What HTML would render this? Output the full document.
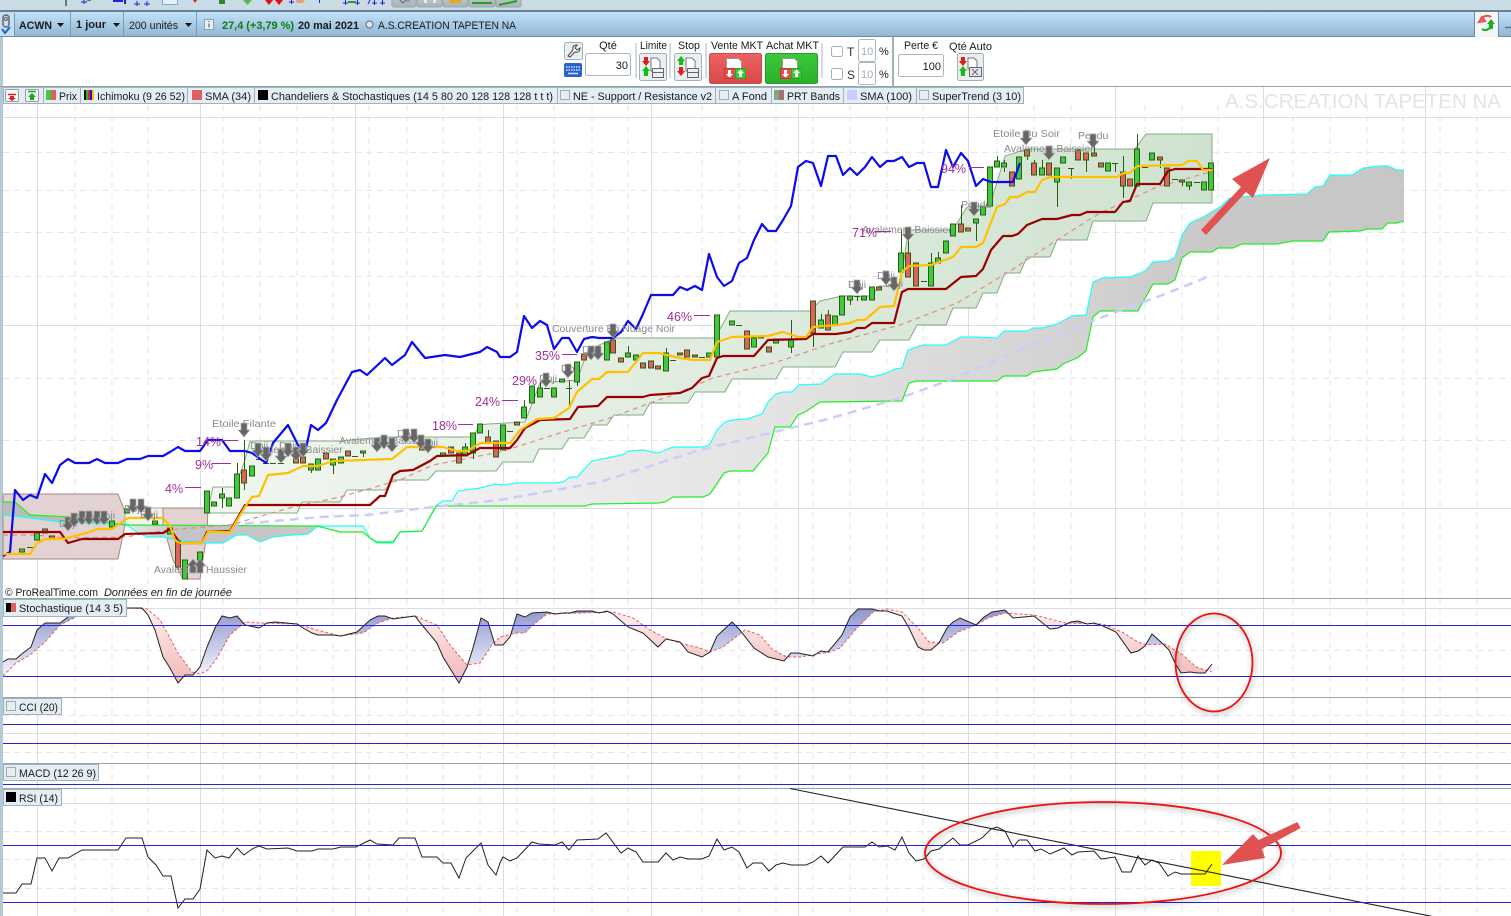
<!DOCTYPE html>
<html><head><meta charset="utf-8"><title>ACWN</title>
<style>
html,body{margin:0;padding:0;background:#fff;width:1511px;height:916px;overflow:hidden}
svg{display:block;font-family:"Liberation Sans",sans-serif}
text{white-space:pre}
.t{font-size:11px;fill:#1a1a1a}
.l{font-size:10.5px;fill:#8a8a8a}
.p{font-size:12.5px;fill:#a0309a}
.gs{stroke:#dcdce6;stroke-width:1;fill:none}
.gd{stroke:#e6e6ea;stroke-width:1;fill:none;stroke-dasharray:6 5}
.blue{stroke:#2323d8;stroke-width:1;fill:none}
.sep{stroke:#97a6ab;stroke-width:1;fill:none}
.box{fill:#e3edf3;stroke:#a0b2bb;stroke-width:1}
.inp{fill:#fff;stroke:#a8b8bd;stroke-width:1}
.btn{fill:#e9eef0;stroke:#a3b0b5;stroke-width:1}
.cb{fill:#e8eef0;stroke:#9eaeb4;stroke-width:1}
</style></head><body>
<svg width="1511" height="916" viewBox="0 0 1511 916" xmlns="http://www.w3.org/2000/svg">
<defs>
<linearGradient id="hd" x1="0" y1="0" x2="0" y2="1"><stop offset="0" stop-color="#c2e2fa"/><stop offset="1" stop-color="#8fb5d1"/></linearGradient>
<linearGradient id="band" gradientUnits="userSpaceOnUse" x1="200" y1="0" x2="1212" y2="0"><stop offset="0" stop-color="#f0f6f0"/><stop offset=".35" stop-color="#e5efe5"/><stop offset="1" stop-color="#cfe2cf"/></linearGradient>
<linearGradient id="cloud" gradientUnits="userSpaceOnUse" x1="0" y1="0" x2="1511" y2="0">
<stop offset="0" stop-color="#bbbbbb"/><stop offset=".08" stop-color="#bbbbbb"/><stop offset=".083" stop-color="#e8e8e8"/><stop offset=".12" stop-color="#c4c4c4"/><stop offset=".21" stop-color="#c8c8c8"/><stop offset=".212" stop-color="#f2f2f2"/><stop offset=".3" stop-color="#f0f0f0"/><stop offset=".5" stop-color="#e4e4e4"/><stop offset=".6" stop-color="#dcdcdc"/><stop offset=".72" stop-color="#d2d2d2"/><stop offset=".8" stop-color="#c8c8c8"/><stop offset="1" stop-color="#c6c6c6"/></linearGradient>
<linearGradient id="sb" gradientUnits="userSpaceOnUse" x1="0" y1="608" x2="0" y2="676"><stop offset="0" stop-color="#8e95cf"/><stop offset="1" stop-color="#f4f4fb"/></linearGradient>
<linearGradient id="sr" gradientUnits="userSpaceOnUse" x1="0" y1="608" x2="0" y2="676"><stop offset="0" stop-color="#fdf2f2"/><stop offset="1" stop-color="#f3bcbc"/></linearGradient>
<linearGradient id="rb" x1="0" y1="0" x2="0" y2="1"><stop offset="0" stop-color="#ee6262"/><stop offset="1" stop-color="#d84a4a"/></linearGradient>
<linearGradient id="gb" x1="0" y1="0" x2="0" y2="1"><stop offset="0" stop-color="#3cc83c"/><stop offset="1" stop-color="#2bb02b"/></linearGradient>
<linearGradient id="tb" x1="0" y1="0" x2="0" y2="1"><stop offset="0" stop-color="#bcc6cb"/><stop offset="1" stop-color="#a8b4ba"/></linearGradient>
<symbol id="ad" overflow="visible"><path d="M-3 0h6v7h3l-6 7-6-7h3z" fill="#666" stroke="#b0b0b0" stroke-width=".7"/></symbol>
<symbol id="au" overflow="visible"><path d="M-3 14h6v-7h3l-6-7-6 7h3z" fill="#666" stroke="#b0b0b0" stroke-width=".7"/></symbol>
<clipPath id="aboveD"><polygon points="3,598 3,676 16,663 30,655 45,642 60,625 78,616 128,608 147,609 160,620 170,638 178,653 192,672 200,674 208,670 217,658 230,635 245,622 260,623 297,624 317,630 340,636 363,633 378,623 393,618 415,616 437,625 450,645 467,665 480,663 492,645 500,637 517,633 525,633 533,625 547,614 613,612 633,618 650,630 665,638 683,644 697,647 710,652 723,647 745,630 760,635 773,650 787,657 800,657 830,652 840,648 857,628 873,612 887,609 902,612 918,628 929,642 943,643 958,632 976,625 988,618 1005,613 1034,615 1066,623 1103,624 1122,632 1138,642 1147,645 1165,644 1183,655 1196,667 1212,672 1212,598"/></clipPath>
<clipPath id="belowD"><polygon points="3,697 3,676 16,663 30,655 45,642 60,625 78,616 128,608 147,609 160,620 170,638 178,653 192,672 200,674 208,670 217,658 230,635 245,622 260,623 297,624 317,630 340,636 363,633 378,623 393,618 415,616 437,625 450,645 467,665 480,663 492,645 500,637 517,633 525,633 533,625 547,614 613,612 633,618 650,630 665,638 683,644 697,647 710,652 723,647 745,630 760,635 773,650 787,657 800,657 830,652 840,648 857,628 873,612 887,609 902,612 918,628 929,642 943,643 958,632 976,625 988,618 1005,613 1034,615 1066,623 1103,624 1122,632 1138,642 1147,645 1165,644 1183,655 1196,667 1212,672 1212,697"/></clipPath>
</defs>

<rect width="1511" height="916" fill="#fff"/>
<!-- top bar -->
<rect width="1511" height="11" fill="#c9dbe5"/>
<rect y="10" width="1511" height="2" fill="#6a8193"/>
<g>
<path d="M66 0v6" stroke="#111" stroke-width="1"/>
<path d="M81 2h6M84 0v4" stroke="#2020e0"/><path d="M87 0h4" stroke="#2a9a2a" stroke-width="2"/>
<path d="M113 1h10" stroke="#2020e0" stroke-width="2"/><path d="M125 0v4" stroke="#2020e0" stroke-width="2"/>
<path d="M134 4h6M137 1v5M144 4h6M147 1v5" stroke="#2020e0"/>
<path d="M162.500 0v4.500h15v-4.500" stroke="#7aa6e6" fill="#e8f0ff"/>
<path d="M193 0h4l-2 3z" fill="#e02020"/>
<rect x="219" width="6" height="4" fill="#2a8a2a"/>
<path d="M243 0h9l-4.500 5z" fill="#55bb55"/>
<path d="M265 0h8l-4 5zM275 0h8l-4 5z" fill="#e01010"/>
<path d="M289 2h5M291.500 0v4" stroke="#2020e0"/><path d="M296 0h9l-2 3h-6z" fill="#f0a070"/>
<path d="M319.500 0v3" stroke="#2020e0"/>
<path d="M343 3h5M345.500 0v5M355 3h5M357.500 0v5" stroke="#2020e0"/><path d="M348 2h8" stroke="#2a9a2a" stroke-width="2"/>
<path d="M368 4l2-4M372 3h5M374.500 0v5M380 3h5M382.500 0v5" stroke="#2020e0"/>
<rect x="392" y="-3" width="24" height="10" rx="2" fill="url(#tb)" stroke="#9aa7ad"/>
<rect x="417" y="-3" width="25" height="10" rx="2" fill="url(#tb)" stroke="#9aa7ad"/>
<rect x="443" y="-3" width="25" height="10" rx="2" fill="url(#tb)" stroke="#9aa7ad"/>
<rect x="469" y="-3" width="26" height="10" rx="2" fill="url(#tb)" stroke="#9aa7ad"/>
<rect x="496" y="-3" width="25" height="10" rx="2" fill="url(#tb)" stroke="#9aa7ad"/>
<path d="M400 0l3 3 3-3" stroke="#666" fill="none"/><path d="M406 1h4" stroke="#6666dd"/>
<rect x="424" y="0" width="3" height="3" fill="#e8e8e8"/><rect x="433" y="0" width="3" height="3" fill="#e8e8e8"/>
<rect x="449" y="0" width="12" height="3" fill="#e6a820"/>
<path d="M472 3h20" stroke="#1fa01f" stroke-width="2"/>
<path d="M499 5l18-4" stroke="#1fa01f" stroke-width="2"/>
</g>
<!-- blue header -->
<rect y="12" width="1511" height="25" fill="url(#hd)"/>
<path d="M0 36.500h1511" stroke="#6b8ea8"/>
<path d="M70.500 12v24M123.500 12v24M196.500 12v24" stroke="#7a9ab0"/>
<rect x="0" y="13" width="14" height="23" fill="#c4dff2"/>
<path d="M14.500 13v24" stroke="#7a9ab0"/>
<rect x="3" y="15" width="6" height="12" rx="3" fill="none" stroke="#666" stroke-width="1.500"/>
<circle cx="6" cy="19" r="1.500" fill="none" stroke="#666"/>
<path d="M2 29l3 4 5-6" stroke="#2a5fd0" stroke-width="2" fill="none"/>
<text x="19" y="29" class="t" font-weight="bold" textLength="33" lengthAdjust="spacingAndGlyphs">ACWN</text><path d="M57 23h7l-3.500 4z" fill="#111"/>
<text x="76" y="28" class="t" font-weight="bold" textLength="30" lengthAdjust="spacingAndGlyphs">1 jour</text><path d="M113 23h7l-3.500 4z" fill="#111"/>
<text x="129" y="29" class="t" textLength="49" lengthAdjust="spacingAndGlyphs">200 unités</text><path d="M185 23h7l-3.500 4z" fill="#111"/>
<rect x="204.500" y="19.500" width="9" height="10" fill="#e9eef2" stroke="#8da0ad"/><path d="M209 21v1M209 23.500v4" stroke="#445"/>
<text x="222" y="29" class="t" font-weight="bold" style="fill:#0a7d0a" textLength="72" lengthAdjust="spacingAndGlyphs">27,4 (+3,79 %)</text>
<text x="298" y="29" class="t" font-weight="bold" textLength="61" lengthAdjust="spacingAndGlyphs">20 mai 2021</text>
<circle cx="369.500" cy="24.500" r="3.500" fill="#dfe8ee" stroke="#667"/>
<text x="378" y="29" class="t" textLength="138" lengthAdjust="spacingAndGlyphs">A.S.CREATION TAPETEN NA</text>
<rect x="1475" y="12" width="23" height="25" fill="#f2f6f9"/>
<path d="M1474.500 12v25M1498.500 12v25" stroke="#6b8ea8"/>
<path d="M1491 17c-3-2-8-2-9 3M1479 22l3-5 3 4z" fill="none" stroke="#e85050" stroke-width="2"/>
<path d="M1482 29c3 2 8 1 9-4" fill="none" stroke="#18b018" stroke-width="2"/><path d="M1487 24l4-5 4 5h-2v5h-4v-5z" fill="#18b018"/>
<path d="M1505 27.500h6" stroke="#55778f" stroke-width="1.500"/>

<!-- left strip -->
<rect x="0" y="37" width="3" height="879" fill="#b4c9d6"/>

<!-- order panel -->
<g>
<rect x="564.500" y="42.500" width="18" height="17" rx="2" class="btn"/>
<path d="M568 56l5-6c-1-3 1-5 4-5l-2 3 2 2 3-2c0 3-2 5-5 4l-5 5z" fill="#fff" stroke="#444" stroke-width="1"/>
<rect x="564" y="63" width="18" height="14" rx="2" fill="#2a62d0"/>
<path d="M566 67h14M566 70h14" stroke="#cfe0ff" stroke-width="1.500" stroke-dasharray="1.500 1"/><path d="M568 73.500h10" stroke="#cfe0ff" stroke-width="1.500"/>
<text x="608" y="49" class="t" text-anchor="middle">Qté</text>
<rect x="585.500" y="53.500" width="45" height="22" rx="2" class="inp"/>
<text x="628" y="69" class="t" text-anchor="end">30</text>
<path d="M636 43v35M670 43v35M706 43v35M822 43v35" stroke="#a9b7bc"/>
<text x="640" y="49" class="t" textLength="27" lengthAdjust="spacingAndGlyphs">Limite</text>
<text x="678" y="49" class="t" textLength="22" lengthAdjust="spacingAndGlyphs">Stop</text>
<text x="711" y="49" class="t" textLength="52" lengthAdjust="spacingAndGlyphs">Vente MKT</text>
<text x="766" y="49" class="t" textLength="53" lengthAdjust="spacingAndGlyphs">Achat MKT</text>
<!-- limite -->
<rect x="639.500" y="53.500" width="27" height="27" rx="2" class="btn"/>
<path d="M651 58h6l3 3v10h-9z" fill="#fff" stroke="#777"/>
<path d="M644 57h4v4h2l-4 5-4-5h2z" fill="#e02020"/><path d="M644 76v-5h-2l4-5 4 5h-2v5z" fill="#10c010"/>
<rect x="652.500" y="68.500" width="11" height="9" fill="#eee" stroke="#667"/><path d="M652 72.500h12" stroke="#667"/>
<!-- stop -->
<rect x="674.500" y="53.500" width="27" height="27" rx="2" class="btn"/>
<path d="M686 58h6l3 3v10h-9z" fill="#fff" stroke="#777"/>
<path d="M679 65v-4h-2l4-5 4 5h-2v4z" fill="#10c010"/><path d="M679 67h4v4h2l-4 5-4-5h2z" fill="#e02020"/>
<rect x="687.500" y="68.500" width="11" height="9" fill="#eee" stroke="#667"/><path d="M687 72.500h12" stroke="#667"/>
<!-- vente / achat -->
<rect x="709.500" y="53.500" width="52" height="30" rx="2" fill="url(#rb)" stroke="#c94a4a"/>
<path d="M726.500 58.500h12l3 3v11h-15z" fill="#fff" stroke="#999"/>
<rect x="724.500" y="68.500" width="11" height="10" fill="#e05050" stroke="#c33"/><rect x="735.500" y="68.500" width="10" height="10" fill="#3ec83e" stroke="#2a2"/>
<path d="M728 70h3v4h2l-3.500 3.500-3.500-3.500h2z" fill="#fff"/><path d="M739 77v-4h-2l3.500-3.500 3.500 3.500h-2v4z" fill="#fff"/>
<rect x="765.500" y="53.500" width="52" height="30" rx="2" fill="url(#gb)" stroke="#23a023"/>
<path d="M782.500 58.500h12l3 3v11h-15z" fill="#fff" stroke="#999"/>
<rect x="780.500" y="68.500" width="11" height="10" fill="#e05050" stroke="#c33"/><rect x="791.500" y="68.500" width="10" height="10" fill="#3ec83e" stroke="#2a2"/>
<path d="M784 70h3v4h2l-3.500 3.500-3.500-3.500h2z" fill="#fff"/><path d="M795 77v-4h-2l3.500-3.500 3.500 3.500h-2v4z" fill="#fff"/>
<!-- T / S -->
<rect x="831.500" y="46.500" width="11" height="10" rx="2" fill="#fff" stroke="#a3b0b5"/>
<text x="847" y="56" class="t" style="fill:#333;font-size:12px">T</text>
<rect x="858.500" y="39.500" width="17" height="22" rx="2" class="inp"/>
<text x="861" y="55" class="t" style="fill:#aab">10</text>
<text x="879" y="55" class="t">%</text>
<rect x="831.500" y="68.500" width="11" height="11" rx="2" fill="#fff" stroke="#a3b0b5"/>
<text x="847" y="79" class="t" style="fill:#333;font-size:12px">S</text>
<rect x="858.500" y="62.500" width="17" height="22" rx="2" class="inp"/>
<text x="861" y="78" class="t" style="fill:#aab">10</text>
<text x="879" y="78" class="t">%</text>
<rect x="892" y="37" width="2" height="49" fill="#9fb0b6"/>
<text x="904" y="49" class="t" textLength="34" lengthAdjust="spacingAndGlyphs">Perte €</text>
<rect x="898.500" y="54.500" width="45" height="22" rx="2" class="inp"/>
<text x="941" y="70" class="t" text-anchor="end">100</text>
<text x="949" y="50" class="t" textLength="43" lengthAdjust="spacingAndGlyphs">Qté Auto</text>
<rect x="957.500" y="53.500" width="26" height="27" rx="2" class="btn"/>
<path d="M968 58h6l3 3v8h-9z" fill="#fff" stroke="#777"/>
<path d="M961 57h4v4h2l-4 5-4-5h2z" fill="#e02020"/><path d="M961 76v-5h-2l4-5 4 5h-2v5z" fill="#10c010"/>
<rect x="969.500" y="67.500" width="12" height="9" fill="#e8e8e8" stroke="#667"/><path d="M972 69l6 6M978 69l-6 6" stroke="#667"/>
</g>

<!-- main chart frame -->
<path d="M0 86.500h1511" stroke="#93a5a8"/>
<g class="gd">
<path class="gd" d="M75 105V598M112 105V598M148 105V598M223 105V598M260 105V598M297 105V598M333 105V598M369 105V598M407 105V598M443 105V598M480 105V598M517 105V598M554 105V598M592 105V598M628 105V598M702 105V598M739 105V598M776 105V598M813 105V598M850 105V598M887 105V598M923 105V598M997 105V598M1034 105V598M1071 105V598M1145 105V598M1182 105V598M1218 105V598M1293 105V598M1330 105V598M1367 105V598M1403 105V598M1440 105V598M1477 105V598"/>
<path class="gd" d="M75 599V916M112 599V916M148 599V916M223 599V916M260 599V916M297 599V916M333 599V916M369 599V916M407 599V916M443 599V916M480 599V916M517 599V916M554 599V916M592 599V916M628 599V916M702 599V916M739 599V916M776 599V916M813 599V916M850 599V916M887 599V916M923 599V916M997 599V916M1034 599V916M1071 599V916M1145 599V916M1182 599V916M1218 599V916M1293 599V916M1330 599V916M1367 599V916M1403 599V916M1440 599V916M1477 599V916"/>
<path class="gd" d="M3 152.500H1511M3 190.500H1511M3 232.500H1511M3 276.500H1511M3 378.500H1511M3 440.500H1511M3 650.500H1511M3 715.500H1511M3 752.500H1511M3 831.500H1511M3 859.500H1511M3 888.500H1511"/>
</g>
<path class="gs" d="M37.500 87V916M200.500 87V916M355.500 87V916M503.500 87V916M651.500 87V916M798.500 87V916M968.500 87V916M1115.500 87V916M1263.500 87V916M1425.500 87V916"/>
<path class="gs" d="M3 117.500H1511M3 325.500H1511M3 508.500H1511M3 608.500H1511M3 733.500H1511M3 803.500H1511"/>

<!-- PRT bands -->
<polygon points="3,494 118,494 125,512 125,525 118,559 3,559" fill="#e3d2d2" stroke="#a88484"/>
<polygon points="125,512 130,508 163,508 168,524 163,525 125,525" fill="#eef4ee" stroke="#8fb58f"/>
<polygon points="163,508 208,508 207,533 200,579 183,579 173,560 163,525" fill="#e4d2d2" stroke="#a88484"/>
<polygon points="207,513 213,487 235,487 245,460 250,441 340,441 383,437 473,437 480,425 488,424 525,422 540,383 577,380 588,350 615,338 715,338 730,311 810,311 820,301 842,296 872,296 879,286 900,286 907,240 908,230 953,230 967,207 990,205 1005,156 1027,149 1135,149 1146,134 1212,134 1212,203 1153,203 1146,221 1093,221 1087,240 1057,240 1050,257 1027,257 1020,273 1005,273 997,293 983,293 976,308 953,308 946,325 917,325 909,340 880,340 872,352 843,352 835,367 783,367 776,379 732,379 725,392 695,392 688,403 650,403 643,415 614,415 607,425 592,425 584,438 569,438 562,449 539,449 533,462 503,462 496,471 436,471 428,480 393,480 385,490 347,490 340,502 302,502 297,513" fill="url(#band)" stroke="#83ac83"/>

<!-- cloud -->
<polygon fill="url(#cloud)" points="3,515 30,518 67,523 125,524 137,532 147,537 163,537 177,540 203,543 223,543 237,535 247,535 260,542 273,537 293,535 308,534 318,526 363,526 370,538 377,543 393,543 400,532 422,531 437,505 443,501 452,501 458,491 480,488 495,484 502,485 517,483 555,483 563,482 570,477 577,477 592,461 607,458 622,455 629,451 643,450 658,453 673,447 703,447 710,444 717,430 725,422 732,420 747,419 762,414 768,402 776,394 783,392 792,392 799,385 821,384 835,374 850,374 860,374 872,377 887,373 895,369 902,368 908,350 923,345 946,345 961,337 975,337 997,338 1004,331 1027,331 1033,328 1042,328 1057,324 1072,316 1086,315 1093,282 1102,278 1130,277 1145,271 1153,262 1168,261 1175,257 1182,235 1190,223 1203,217 1220,207 1230,198 1263,195 1307,194 1315,187 1323,186 1330,175 1352,175 1363,168 1380,166 1388,166 1397,170 1404,170 1404,221 1397,223 1388,223 1382,229 1367,229 1360,231 1329,232 1323,241 1293,241 1277,244 1242,244 1233,248 1218,248 1212,252 1190,252 1182,258 1175,280 1168,284 1153,284 1138,311 1100,311 1093,317 1086,351 1077,358 1063,364 1057,369 1033,372 1027,376 1004,376 997,381 917,381 909,383 902,401 820,402 805,412 798,415 790,427 775,427 768,453 753,471 730,471 724,473 710,494 703,497 673,497 665,502 658,503 592,504 585,506 436,506 422,531 400,532 393,542 377,542 370,538 363,532 340,532 317,526 125,525 72,517 30,515 15,502 3,502"/>
<polyline fill="none" stroke="#22ffff" stroke-width="1.200" points="3,515 30,518 67,523 125,524 137,532 147,537 163,537 177,540 203,543 223,543 237,535 247,535 260,542 273,537 293,535 308,534 318,526 363,526 370,538 377,543 393,543 400,532 422,531 437,505 443,501 452,501 458,491 480,488 495,484 502,485 517,483 555,483 563,482 570,477 577,477 592,461 607,458 622,455 629,451 643,450 658,453 673,447 703,447 710,444 717,430 725,422 732,420 747,419 762,414 768,402 776,394 783,392 792,392 799,385 821,384 835,374 850,374 860,374 872,377 887,373 895,369 902,368 908,350 923,345 946,345 961,337 975,337 997,338 1004,331 1027,331 1033,328 1042,328 1057,324 1072,316 1086,315 1093,282 1102,278 1130,277 1145,271 1153,262 1168,261 1175,257 1182,235 1190,223 1203,217 1220,207 1230,198 1263,195 1307,194 1315,187 1323,186 1330,175 1352,175 1363,168 1380,166 1388,166 1397,170 1404,170"/>
<polyline fill="none" stroke="#22ee22" stroke-width="1.200" points="3,502 15,502 30,515 72,517 125,525 317,526 340,532 363,532 370,538 377,542 393,542 400,532 422,531 436,506 585,506 592,504 658,503 665,502 673,497 703,497 710,494 724,473 730,471 753,471 768,453 775,427 790,427 798,415 805,412 820,402 902,401 909,383 917,381 997,381 1004,376 1027,376 1033,372 1057,369 1063,364 1077,358 1086,351 1093,317 1100,311 1138,311 1153,284 1168,284 1175,280 1182,258 1190,252 1212,252 1218,248 1233,248 1242,244 1277,244 1293,241 1323,241 1329,232 1360,231 1367,229 1382,229 1388,223 1397,223 1404,221"/>

<!-- SMA 100 -->
<polyline fill="none" stroke="#ccccfa" stroke-width="2.500" stroke-dasharray="9 6" points="230,525 320,517 367,515 433,507 500,500 600,482 700,450 828,419 900,398 950,380 1020,350 1100,318 1160,296 1210,276"/>
<!-- SMA 34 -->
<polyline fill="none" stroke="#e08a8a" stroke-width="1.200" stroke-dasharray="5 4" points="3,535 35,535 67,538 125,537 167,530 230,525 293,507 340,497 400,480 433,465 500,452 560,433 613,417 650,403 673,395 713,378 777,362 833,343 900,325 957,303 1007,273 1057,240 1100,213 1133,198 1157,187 1210,172"/>

<!-- candles wicks -->
<path stroke="#2b5d10" stroke-width="1" fill="none" d="M222.500 488V508M237.500 463V474M244.500 440V490M311.500 470V473M333.500 465V474M363.500 453V457M473.500 453V459M465.500 443V447M488.500 430V437M524.500 400V407M540.500 380V388M569.500 380V408M577.500 382V386M628.500 346V353M666.500 348V353M791.500 320V339M791.500 347V353M813.500 333V347M821.500 314V320M828.500 310V315M850.500 300V305M857.500 296V301M908.500 240V253M901.500 230V253M931.500 253V263M938.500 252V258M961.500 205V224M976.500 223V241M1057.500 182V207M1071.500 168V179M1086.500 160V172M1094.500 143V153M1115.500 163V172M1123.500 156V198M1137.500 134V149M1160.500 160V168M1182.500 182V186M1189.500 186V190M997.500 156V161M1004.500 160V163M1004.500 168V172M1027.500 156V160M1042.500 160V168M1034.500 160V163
M27 547.500h6M256 459.500h6M263 463.500h6M270 463.500h6M278 463.500h6M352 456.500h6M507 431.500h6M544 388.500h6M566 388.500h6M670 360.500h6M699 357.500h6M736 325.500h6M854 296.500h6M921 281.500h6M1068 168.500h6M1112 163.500h6M1142 167.500h6M1172 179.500h6M1194 182.500h6"/>
<!-- green candles -->
<path fill="#3fc93f" stroke="#2b5d10" stroke-width="1" d="M19.500 549h5V552h-5zM34.500 533h5V540h-5zM109.500 521h5V527h-5zM124.500 509h5V513h-5zM152.500 521h5V524h-5zM167.500 528h5V534h-5zM182.500 560h5V579h-5zM197.500 552h5V560h-5zM204.500 491h5V513h-5zM211.500 502h5V506h-5zM219.500 494h5V498h-5zM226.500 498h5V506h-5zM234.500 474h5V498h-5zM249.500 466h5V476h-5zM308.500 464h5V470h-5zM315.500 459h5V470h-5zM330.500 459h5V465h-5zM338.500 457h5V463h-5zM360.500 451h5V453h-5zM440.500 453h5V456h-5zM462.500 447h5V456h-5zM470.500 433h5V453h-5zM477.500 424h5V433h-5zM500.500 425h5V450h-5zM521.500 407h5V418h-5zM529.500 386h5V403h-5zM537.500 388h5V397h-5zM551.500 388h5V397h-5zM559.500 379h5V382h-5zM574.500 362h5V382h-5zM604.500 342h5V360h-5zM625.500 353h5V357h-5zM633.500 355h5V360h-5zM663.500 353h5V371h-5zM706.500 353h5V357h-5zM714.500 315h5V357h-5zM729.500 321h5V325h-5zM751.500 338h5V347h-5zM758.500 336h5V338h-5zM773.500 339h5V343h-5zM788.500 339h5V347h-5zM818.500 320h5V328h-5zM832.500 316h5V325h-5zM839.500 296h5V315h-5zM847.500 296h5V300h-5zM861.500 296h5V300h-5zM869.500 287h5V300h-5zM898.500 253h5V272h-5zM928.500 263h5V286h-5zM935.500 258h5V263h-5zM943.500 241h5V253h-5zM950.500 224h5V236h-5zM973.500 219h5V223h-5zM980.500 207h5V215h-5zM987.500 167h5V206h-5zM994.500 161h5V167h-5zM1001.500 163h5V167h-5zM1016.500 157h5V179h-5zM1039.500 168h5V175h-5zM1054.500 168h5V182h-5zM1060.500 157h5V163h-5zM1105.500 163h5V171h-5zM1134.500 149h5V186h-5zM1149.500 153h5V160h-5zM1186.500 182h5V186h-5zM1201.500 182h5V190h-5zM1208.500 163h5V190h-5z"/>
<!-- red candles -->
<path fill="#e0605c" stroke="#2b5d10" stroke-width="1" d="M42.500 529h5V533h-5zM49.500 536h5V539h-5zM175.500 541h5V567h-5zM241.500 470h5V483h-5zM293.500 459h5V463h-5zM300.500 457h5V463h-5zM323.500 453h5V459h-5zM345.500 451h5V456h-5zM419.500 447h5V450h-5zM448.500 447h5V453h-5zM456.500 453h5V463h-5zM485.500 437h5V443h-5zM493.500 441h5V457h-5zM514.500 422h5V425h-5zM581.500 354h5V360h-5zM610.500 340h5V353h-5zM618.500 358h5V362h-5zM640.500 363h5V368h-5zM648.500 361h5V368h-5zM655.500 366h5V369h-5zM677.500 353h5V355h-5zM684.500 350h5V357h-5zM692.500 355h5V357h-5zM744.500 331h5V349h-5zM766.500 347h5V352h-5zM810.500 301h5V333h-5zM825.500 315h5V330h-5zM876.500 287h5V290h-5zM905.500 253h5V277h-5zM913.500 263h5V286h-5zM958.500 224h5V232h-5zM965.500 228h5V231h-5zM1009.500 172h5V186h-5zM1024.500 150h5V156h-5zM1031.500 163h5V175h-5zM1046.500 163h5V175h-5zM1075.500 150h5V160h-5zM1083.500 153h5V160h-5zM1091.500 153h5V156h-5zM1098.500 163h5V167h-5zM1120.500 172h5V186h-5zM1127.500 179h5V186h-5zM1157.500 157h5V160h-5zM1164.500 168h5V186h-5zM1179.500 180h5V182h-5z"/>

<!-- Blue price line -->
<polyline fill="none" stroke="#0b0bee" stroke-width="2.200" stroke-linejoin="round" points="3,556 10,552 15,490 23,500 30,495 37,498 45,474 52,483 60,465 68,459 75,463 89,463 97,459 105,463 118,463 127,459 140,459 148,456 163,456 170,452 178,447 185,451 200,451 208,440 222,440 230,451 245,451 252,453 266,463 273,443 288,425 298,445 305,453 311,425 318,430 326,423 337,400 345,385 352,372 360,370 367,375 385,358 392,365 405,355 412,342 425,358 445,355 460,357 480,352 487,347 497,352 500,357 510,357 517,352 524,316 532,328 540,321 547,325 554,349 562,338 569,338 577,352 584,339 592,337 599,338 613,338 621,332 628,321 636,329 643,314 651,295 673,295 680,287 687,290 695,286 702,290 709,254 717,277 724,286 732,281 739,263 747,258 754,240 762,224 768,231 776,231 783,220 791,206 798,167 806,161 813,163 821,186 828,156 836,156 843,175 850,168 857,175 865,167 872,157 880,167 887,161 894,161 902,157 909,167 917,163 924,163 931,187 938,187 946,150 953,167 961,153 968,161 976,186 983,179 991,182 1013,182 1020,163"/>
<!-- Kijun dark red -->
<polyline fill="none" stroke="#990000" stroke-width="2.200" stroke-linejoin="round" points="3,532 60,532 68,543 82,539 118,539 125,534 163,533 170,529 180,543 202,543 207,532 230,531 245,505 370,505 380,496 385,496 393,475 400,471 413,470 430,461 437,456 467,455 480,448 510,448 517,440 525,428 540,420 570,419 578,407 598,406 607,397 643,397 650,395 680,393 692,388 702,378 709,376 717,358 723,356 754,356 768,340 806,339 813,334 836,334 850,332 857,328 865,328 872,323 894,323 902,292 908,289 946,289 961,277 976,276 983,269 991,250 1003,236 1012,236 1018,234 1027,225 1042,219 1057,219 1072,215 1080,215 1087,212 1115,212 1123,202 1130,201 1137,184 1160,184 1168,171 1175,169 1212,169"/>
<!-- Tenkan orange -->
<polyline fill="none" stroke="#ffc000" stroke-width="2.200" stroke-linejoin="round" points="3,554 30,554 37,543 45,539 63,539 90,532 97,529 112,529 128,518 163,518 170,526 175,540 180,543 202,543 208,532 230,532 245,507 252,497 259,496 268,475 288,473 303,466 318,466 333,461 392,459 407,447 443,447 457,451 467,451 480,443 510,443 520,430 537,419 554,418 569,408 577,392 592,379 599,379 607,372 628,372 643,353 658,353 680,358 693,360 710,360 717,342 732,337 768,336 783,332 798,337 806,337 813,327 836,325 850,323 857,320 865,320 880,307 894,306 902,272 909,266 931,265 953,257 961,247 976,247 983,243 997,207 1005,204 1010,197 1018,197 1027,192 1035,192 1042,180 1050,177 1117,177 1123,173 1130,173 1137,166 1182,165 1188,161 1197,161 1203,170 1212,170"/>

<!-- pattern labels -->
<g class="l">
<text class="l" x="212" y="427" textLength="64" lengthAdjust="spacingAndGlyphs">Etoile Filante</text>
<text class="l" x="154" y="573" textLength="93" lengthAdjust="spacingAndGlyphs">Avalement Haussier</text>
<text class="l" x="59" y="527">Doji</text><text class="l" x="76" y="521">Doji</text><text class="l" x="97" y="519">Doji</text>
<text class="l" x="124" y="512">Doji</text><text class="l" x="140" y="518">Doji</text>
<text class="l" x="250" y="449">Doji</text><text class="l" x="279" y="449">Doji</text>
<text class="l" x="253" y="453">Avalement Baissier</text>
<text class="l" x="339" y="444">Avalement Baissier</text>
<text class="l" x="397" y="437">Doji</text><text class="l" x="420" y="446">Doji</text>
<text class="l" x="552" y="332" textLength="123" lengthAdjust="spacingAndGlyphs">Couverture En Nuage Noir</text>
<text class="l" x="539" y="382">Doji</text><text class="l" x="561" y="372">Doji</text><text class="l" x="582" y="353">Doji</text>
<text class="l" x="848" y="288">Doji</text><text class="l" x="877" y="279">Doji</text><text class="l" x="885" y="287">Doji</text>
<text class="l" x="862" y="233">Avalement Baissier</text>
<text class="l" x="961" y="208">Pendu</text>
<text class="l" x="993" y="137" textLength="67" lengthAdjust="spacingAndGlyphs">Etoile Du Soir</text>
<text class="l" x="1004" y="152">Avalement Baissier</text>
<text class="l" x="1078" y="139">Pendu</text>
</g>
<!-- gray arrows -->
<g>
<use href="#ad" x="244" y="423"/><use href="#ad" x="68" y="517"/><use href="#ad" x="74" y="513"/><use href="#ad" x="82" y="511"/><use href="#ad" x="89" y="511"/><use href="#ad" x="97" y="511"/><use href="#ad" x="104" y="511"/><use href="#ad" x="133" y="499"/><use href="#ad" x="141" y="499"/><use href="#ad" x="148" y="507"/>
<use href="#ad" x="258" y="443"/><use href="#ad" x="266" y="447"/><use href="#ad" x="281" y="449"/><use href="#ad" x="288" y="443"/><use href="#ad" x="296" y="447"/><use href="#ad" x="303" y="443"/>
<use href="#ad" x="377" y="438"/><use href="#ad" x="384" y="435"/><use href="#ad" x="392" y="438"/><use href="#ad" x="406" y="429"/><use href="#ad" x="414" y="429"/><use href="#ad" x="421" y="435"/><use href="#ad" x="428" y="439"/>
<use href="#au" x="193" y="559"/><use href="#au" x="200" y="559"/>
<use href="#ad" x="546" y="373"/><use href="#ad" x="568" y="364"/><use href="#ad" x="591" y="346"/><use href="#ad" x="598" y="346"/><use href="#ad" x="613" y="324"/><use href="#ad" x="857" y="280"/><use href="#ad" x="886" y="271"/><use href="#ad" x="894" y="277"/><use href="#ad" x="908" y="227"/><use href="#ad" x="974" y="202"/><use href="#ad" x="1026" y="131"/><use href="#ad" x="1049" y="146"/><use href="#ad" x="1093" y="134"/>
</g>
<!-- percent -->
<g>
<text class="p" x="165" y="493">4%</text><path d="M185 487.500h16" stroke="#a0309a"/>
<text class="p" x="195" y="469">9%</text><path d="M212 463.500h19" stroke="#a0309a"/>
<text class="p" x="196" y="446">14%</text><path d="M220 440.500h18" stroke="#a0309a"/>
<text class="p" x="432" y="430">18%</text><path d="M458 424.500h15" stroke="#a0309a"/>
<text class="p" x="475" y="406">24%</text><path d="M502 400.500h16" stroke="#a0309a"/>
<text class="p" x="512" y="385">29%</text>
<text class="p" x="535" y="360">35%</text><path d="M562 354.500h15" stroke="#a0309a"/>
<text class="p" x="667" y="321">46%</text><path d="M694 315.500h16" stroke="#a0309a"/>
<text class="p" x="852" y="237">71%</text><path d="M875 231.500h16" stroke="#a0309a"/>
<text class="p" x="941" y="173">94%</text><path d="M969 167.500h15" stroke="#a0309a"/>
</g>
<text x="1225" y="108" font-size="20.500" fill="#e2e4ea" textLength="276" lengthAdjust="spacingAndGlyphs">A.S.CREATION TAPETEN NA</text>

<text x="5" y="596" class="t" textLength="93" lengthAdjust="spacingAndGlyphs">© ProRealTime.com</text>
<text x="104" y="596" class="t" font-style="italic" textLength="128" lengthAdjust="spacingAndGlyphs">Données en fin de journée</text>

<!-- separators -->
<path class="sep" d="M3 598.500H1511M3 697.500H1511M3 763.500H1511M3 788.500H1511"/>

<!-- Stochastic -->
<g clip-path="url(#aboveD)"><polygon fill="url(#sb)" points="3,662 8,659 16,659 23,653 31,647 37,630 45,623 60,623 68,617 77,612 127,608 142,608 148,615 155,630 163,657 170,668 178,683 185,675 193,675 200,667 207,647 215,628 222,616 230,618 237,616 245,625 259,628 267,623 275,622 297,624 303,628 312,633 318,635 333,635 341,636 357,632 370,620 378,616 385,616 393,619 415,616 422,625 437,643 443,657 459,683 467,667 473,648 481,618 488,622 495,645 503,645 510,637 517,614 525,617 532,613 547,612 555,614 563,613 570,613 577,611 592,611 599,613 607,611 613,614 628,627 643,633 658,647 666,639 680,642 688,652 702,657 710,652 717,636 732,622 739,629 754,648 768,657 784,661 791,653 798,653 813,656 821,651 828,652 842,635 850,617 858,609 872,609 880,611 887,611 902,616 909,628 918,647 924,650 931,650 939,643 947,628 953,622 960,618 976,625 984,617 992,612 1005,610 1013,618 1034,616 1050,629 1058,628 1071,622 1078,621 1087,624 1094,623 1103,626 1116,632 1131,653 1138,651 1145,646 1152,634 1162,643 1169,650 1175,663 1181,673 1190,672 1197,673 1205,673 1212,664 1212,697 3,697"/></g>
<g clip-path="url(#belowD)"><polygon fill="url(#sr)" points="3,662 8,659 16,659 23,653 31,647 37,630 45,623 60,623 68,617 77,612 127,608 142,608 148,615 155,630 163,657 170,668 178,683 185,675 193,675 200,667 207,647 215,628 222,616 230,618 237,616 245,625 259,628 267,623 275,622 297,624 303,628 312,633 318,635 333,635 341,636 357,632 370,620 378,616 385,616 393,619 415,616 422,625 437,643 443,657 459,683 467,667 473,648 481,618 488,622 495,645 503,645 510,637 517,614 525,617 532,613 547,612 555,614 563,613 570,613 577,611 592,611 599,613 607,611 613,614 628,627 643,633 658,647 666,639 680,642 688,652 702,657 710,652 717,636 732,622 739,629 754,648 768,657 784,661 791,653 798,653 813,656 821,651 828,652 842,635 850,617 858,609 872,609 880,611 887,611 902,616 909,628 918,647 924,650 931,650 939,643 947,628 953,622 960,618 976,625 984,617 992,612 1005,610 1013,618 1034,616 1050,629 1058,628 1071,622 1078,621 1087,624 1094,623 1103,626 1116,632 1131,653 1138,651 1145,646 1152,634 1162,643 1169,650 1175,663 1181,673 1190,672 1197,673 1205,673 1212,664 1212,598 3,598"/></g>
<polyline fill="none" stroke="#e86060" stroke-width="1" stroke-dasharray="3 2" points="3,676 16,663 30,655 45,642 60,625 78,616 128,608 147,609 160,620 170,638 178,653 192,672 200,674 208,670 217,658 230,635 245,622 260,623 297,624 317,630 340,636 363,633 378,623 393,618 415,616 437,625 450,645 467,665 480,663 492,645 500,637 517,633 525,633 533,625 547,614 613,612 633,618 650,630 665,638 683,644 697,647 710,652 723,647 745,630 760,635 773,650 787,657 800,657 830,652 840,648 857,628 873,612 887,609 902,612 918,628 929,642 943,643 958,632 976,625 988,618 1005,613 1034,615 1066,623 1103,624 1122,632 1138,642 1147,645 1165,644 1183,655 1196,667 1212,672"/>
<polyline fill="none" stroke="#222" stroke-width="1" points="3,662 8,659 16,659 23,653 31,647 37,630 45,623 60,623 68,617 77,612 127,608 142,608 148,615 155,630 163,657 170,668 178,683 185,675 193,675 200,667 207,647 215,628 222,616 230,618 237,616 245,625 259,628 267,623 275,622 297,624 303,628 312,633 318,635 333,635 341,636 357,632 370,620 378,616 385,616 393,619 415,616 422,625 437,643 443,657 459,683 467,667 473,648 481,618 488,622 495,645 503,645 510,637 517,614 525,617 532,613 547,612 555,614 563,613 570,613 577,611 592,611 599,613 607,611 613,614 628,627 643,633 658,647 666,639 680,642 688,652 702,657 710,652 717,636 732,622 739,629 754,648 768,657 784,661 791,653 798,653 813,656 821,651 828,652 842,635 850,617 858,609 872,609 880,611 887,611 902,616 909,628 918,647 924,650 931,650 939,643 947,628 953,622 960,618 976,625 984,617 992,612 1005,610 1013,618 1034,616 1050,629 1058,628 1071,622 1078,621 1087,624 1094,623 1103,626 1116,632 1131,653 1138,651 1145,646 1152,634 1162,643 1169,650 1175,663 1181,673 1190,672 1197,673 1205,673 1212,664"/>

<!-- yellow box -->
<rect x="1191" y="851" width="30" height="35" fill="#ffff00"/>
<!-- RSI -->
<polyline fill="none" stroke="#222" stroke-width="1" points="3,893 16,893 22,884 31,884 37,858 45,858 52,871 59,858 68,858 82,850 118,850 126,838 142,838 148,857 156,865 163,876 171,876 178,908 185,899 193,899 200,889 207,850 215,858 222,856 229,858 237,848 244,855 252,849 259,846 267,849 288,848 297,851 312,851 318,849 333,849 341,847 356,847 370,840 377,844 393,845 399,838 415,838 422,857 437,857 443,863 451,863 459,878 466,858 481,843 488,865 496,875 500,863 503,857 510,861 517,858 532,842 539,844 555,845 562,842 569,850 577,840 598,839 606,833 621,853 628,848 636,852 643,862 658,862 666,853 673,860 680,857 688,859 702,859 709,856 717,839 724,850 732,847 739,852 747,868 753,863 762,863 769,871 776,865 783,863 791,865 806,865 813,862 821,856 828,863 843,847 865,847 872,842 879,847 887,846 895,850 902,837 909,853 916,861 924,859 931,851 939,849 953,838 960,845 968,845 982,838 991,829 997,827 1005,831 1013,847 1019,840 1027,840 1035,851 1041,849 1050,854 1064,848 1072,855 1078,852 1094,851 1101,859 1115,857 1122,872 1131,872 1138,856 1145,865 1152,860 1159,863 1168,876 1175,872 1181,874 1205,874 1212,864"/>
<path d="M790 788.500L1440 918" stroke="#222" stroke-width="1.100" fill="none"/>

<!-- blue level lines -->
<path class="blue" d="M3 625.500H1511M3 676.500H1511M3 724.500H1511M3 743.500H1511M3 784.500H1511M3 845.500H1511M3 902.500H1511"/>

<!-- annotations -->
<g style="filter:drop-shadow(1px 2px 3px rgba(0,0,0,.4))">
<ellipse cx="1214" cy="662.500" rx="38.500" ry="49" fill="none" stroke="#ee1111" stroke-width="1.800"/>
<ellipse cx="1103" cy="853" rx="178" ry="51" fill="none" stroke="#ee1111" stroke-width="1.800"/>
</g>
<polygon fill="#e05252" points="1222,865 1253,834 1258.500,840 1297.500,822 1300.500,828 1262,849 1265,858"/>
<polygon fill="#e05252" points="1270,158 1232,179 1241,187 1201,230 1206,235 1246,192 1253,198"/>

<!-- main legend -->
<rect x="3.500" y="87.500" width="1020" height="16" fill="#e3edf3" stroke="#a0b2bb"/>
<path d="M43.500 87v17M80.500 87v17M187.500 87v17M254.500 87v17M557.500 87v17M715.500 87v17M771.500 87v17M843.500 87v17M916.500 87v17" stroke="#a0b2bb"/>
<rect x="5.500" y="89.500" width="13" height="12" rx="1" fill="#f5f8fa" stroke="#8fa3ae"/>
<path d="M8 94.500h8" stroke="#e02020" stroke-width="1.500"/><path d="M10 96h4v2h2l-4 3-4-3h2z" fill="#e02020"/>
<rect x="25.500" y="89.500" width="13" height="12" rx="1" fill="#f5f8fa" stroke="#8fa3ae"/>
<path d="M28 91.500h8" stroke="#10a810" stroke-width="1.500"/><path d="M30 100v-3h-2l4-4 4 4h-2v3z" fill="#10b010"/>
<rect x="46" y="90" width="5" height="10" fill="#44c844"/><rect x="51" y="90" width="5" height="10" fill="#e06060"/>
<text x="59" y="100" class="t" textLength="18" lengthAdjust="spacingAndGlyphs">Prix</text>
<rect x="84" y="90" width="2" height="10" fill="#111"/><rect x="86" y="90" width="2" height="10" fill="#22bb22"/><rect x="88" y="90" width="2" height="10" fill="#ee2222"/><rect x="90" y="90" width="2" height="10" fill="#1818dd"/><rect x="92" y="90" width="2" height="10" fill="#ffc000"/>
<text x="97" y="100" class="t" textLength="88" lengthAdjust="spacingAndGlyphs">Ichimoku (9 26 52)</text>
<rect x="192" y="90" width="10" height="10" fill="#e06060"/>
<text x="205" y="100" class="t" textLength="46" lengthAdjust="spacingAndGlyphs">SMA (34)</text>
<rect x="258" y="90" width="10" height="10" fill="#000"/>
<text x="271" y="100" class="t" textLength="282" lengthAdjust="spacingAndGlyphs">Chandeliers &amp; Stochastiques (14 5 80 20 128 128 128 t t t)</text>
<rect x="560.500" y="90.500" width="9" height="9" class="cb"/>
<text x="573" y="100" class="t" textLength="139" lengthAdjust="spacingAndGlyphs">NE - Support / Resistance v2</text>
<rect x="719.500" y="90.500" width="9" height="9" class="cb"/>
<text x="732" y="100" class="t" textLength="35" lengthAdjust="spacingAndGlyphs">A Fond</text>
<rect x="774" y="90" width="5" height="10" fill="#7fa97f"/><rect x="779" y="90" width="5" height="10" fill="#a87070"/>
<text x="787" y="100" class="t" textLength="53" lengthAdjust="spacingAndGlyphs">PRT Bands</text>
<rect x="847" y="90" width="10" height="10" fill="#ccccff"/>
<text x="860" y="100" class="t" textLength="52" lengthAdjust="spacingAndGlyphs">SMA (100)</text>
<rect x="919.500" y="90.500" width="9" height="9" class="cb"/>
<text x="932" y="100" class="t" textLength="89" lengthAdjust="spacingAndGlyphs">SuperTrend (3 10)</text>

<!-- lower legends -->
<rect x="3.500" y="599.500" width="123" height="17" class="box"/>
<rect x="6" y="603" width="5" height="9" fill="#000"/><rect x="11" y="603" width="5" height="9" fill="#e06060"/>
<text x="19" y="612" class="t" textLength="104" lengthAdjust="spacingAndGlyphs">Stochastique (14 3 5)</text>
<rect x="3.500" y="698.500" width="58" height="16" class="box"/>
<rect x="6.500" y="701.500" width="9" height="9" class="cb"/>
<text x="19" y="711" class="t" textLength="39" lengthAdjust="spacingAndGlyphs">CCI (20)</text>
<rect x="3.500" y="764.500" width="95" height="16" class="box"/>
<rect x="6.500" y="767.500" width="9" height="9" class="cb"/>
<text x="19" y="777" class="t" textLength="77" lengthAdjust="spacingAndGlyphs">MACD (12 26 9)</text>
<rect x="3.500" y="789.500" width="58" height="16" class="box"/>
<rect x="6" y="792" width="10" height="10" fill="#000"/>
<text x="19" y="802" class="t" textLength="39" lengthAdjust="spacingAndGlyphs">RSI (14)</text>
</svg>
</body></html>
